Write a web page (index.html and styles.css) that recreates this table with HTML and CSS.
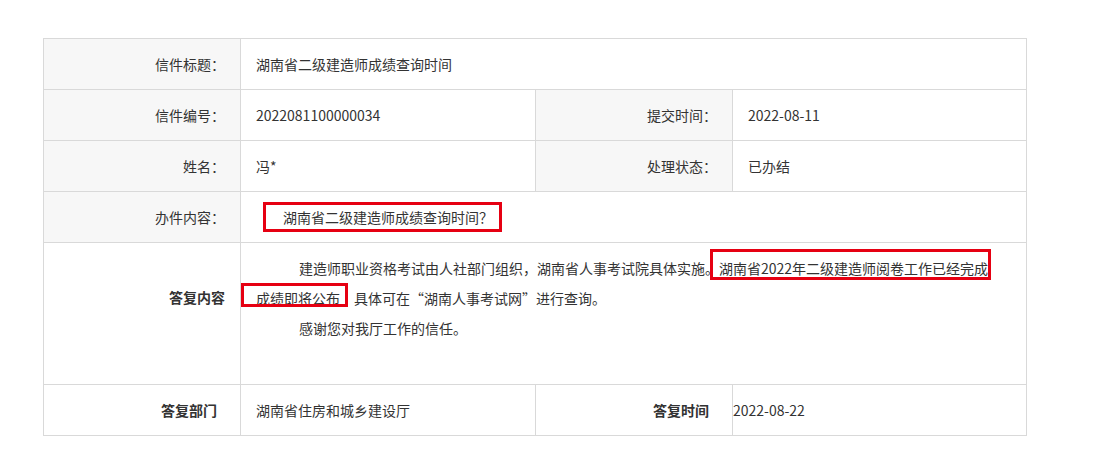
FILE: index.html
```html
<!DOCTYPE html>
<html lang="zh-CN">
<head>
<meta charset="utf-8">
<title>信件详情</title>
<link rel="stylesheet" href="styles.css">
</head>
<body>
<div class="page">
  <div class="letter">
    <div class="lbl">信件标题：</div>
    <div class="val span3">湖南省二级建造师成绩查询时间</div>

    <div class="lbl">信件编号：</div>
    <div class="val">2022081100000034</div>
    <div class="lbl">提交时间：</div>
    <div class="val">2022-08-11</div>

    <div class="lbl">姓名：</div>
    <div class="val">冯*</div>
    <div class="lbl">处理状态：</div>
    <div class="val">已办结</div>

    <div class="lbl">办件内容：</div>
    <div class="val span3"><span class="ask-box">湖南省二级建造师成绩查询时间？</span></div>

    <div class="lbl strong reply-lbl">答复内容</div>
    <div class="val span3 reply">
      <p class="para">建造师职业资格考试由人社部门组织，湖南省人事考试院具体实施。<span class="mark mark-a">湖南省2022年二级建造师阅卷工作已经完成</span><br><span class="mark mark-b">成绩即将公布<span class="covered">，</span></span>具体可在“湖南人事考试网”进行查询。</p>
      <p class="para">感谢您对我厅工作的信任。</p>
    </div>

    <div class="lbl strong wide-pad">答复部门</div>
    <div class="val">湖南省住房和城乡建设厅</div>
    <div class="lbl strong wide-pad">答复时间</div>
    <div class="val flush">2022-08-22</div>
  </div>
</div>
</body>
</html>
```

FILE: styles.css
```css
html, body {
  margin: 0;
  padding: 0;
  background: #ffffff;
}

body {
  font-family: "Noto Sans CJK SC", "Noto Sans", sans-serif;
  font-size: 14px;
  color: #333333;
}

.page {
  padding: 38px 0 0 43px;
}

.letter {
  display: grid;
  width: 984px;
  box-sizing: border-box;
  grid-template-columns: 196px 294px 196px 293px;
  grid-template-rows: 50px 50px 50px 50px 141px 50px;
  gap: 1px;
  padding: 1px;
  background: #d9d9d9;
}

.lbl,
.val {
  display: flex;
  align-items: center;
  min-width: 0;
}

.lbl {
  justify-content: flex-end;
  padding-right: 15px;
  background: #f7f7f7;
}

.lbl.strong {
  font-weight: bold;
  background: #ffffff;
}

.lbl.wide-pad {
  padding-right: 23px;
}

.reply-lbl {
  padding-bottom: 33px;
}

.val {
  padding-left: 15px;
  background: #ffffff;
}

.val.flush {
  padding-left: 0;
}

.span3 {
  grid-column: span 3;
}

.ask-box {
  display: inline-block;
  margin-left: 7px;
  padding: 0 6px 0 17px;
  line-height: 24px;
  border: 3px solid #e60012;
}

.reply {
  display: block;
  padding-top: 10px;
}

.para {
  margin: 0;
  line-height: 30px;
  text-indent: 43px;
}

.mark {
  position: relative;
}

.mark::after {
  content: "";
  position: absolute;
  border: 3px solid #e60012;
  pointer-events: none;
}

.mark-a::after {
  left: -9px;
  right: -3px;
  top: -9px;
  bottom: -2px;
}

.mark-b::after {
  left: -15px;
  right: 6px;
  top: -5px;
  bottom: 1px;
}

/* the comma sits under the annotation frame in the original */
.covered {
  color: transparent;
}
```
